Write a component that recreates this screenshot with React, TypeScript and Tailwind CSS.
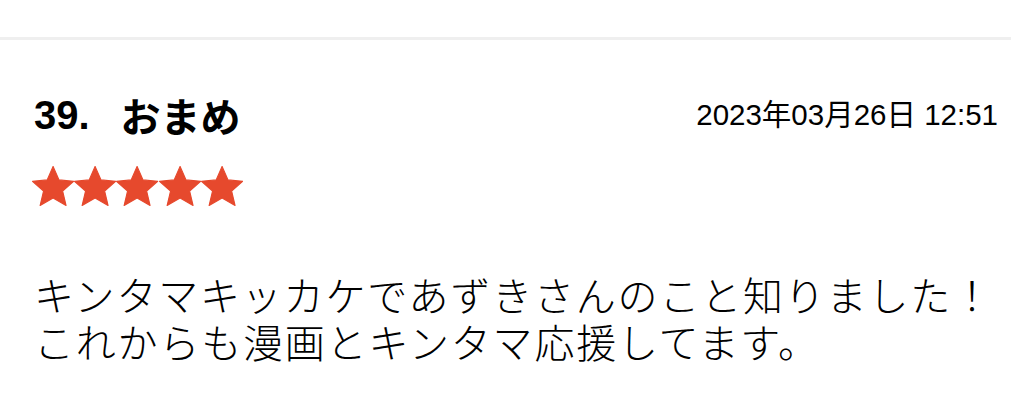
import React from 'react'

const latin = { fontFamily: '"Liberation Sans", "Noto Sans CJK JP", sans-serif' }
const jp = { fontFamily: '"Noto Sans CJK JP", "Liberation Sans", sans-serif' }

function Star() {
  return (
    <svg viewBox="1 1 22 22" className="w-[42.2px] h-[42px]" aria-hidden>
      <path
        d="M12 1.2l3.1 7.1 7.7.7-5.8 5.1 1.8 7.6L12 17.7l-6.8 4 1.8-7.6-5.8-5.1 7.7-.7z"
        fill="#e6492d"
        stroke="#e6492d"
        strokeWidth="0.6"
        strokeLinejoin="round"
      />
    </svg>
  )
}

export default function App() {
  return (
    <div className="w-[1011px] h-[414px] bg-white overflow-hidden text-black">
      <div className="h-[37px]" />
      <div className="h-[3px] bg-[#efefef]" />

      <div className="pl-[34px] pr-[13px]">
        {/* header */}
        <div className="flex items-center justify-between mt-[51px] h-[48px]">
          <div className="flex items-center text-[40px] font-bold leading-none">
            <span style={latin}>39.</span>
            <span style={jp} className="ml-[31px]">おまめ</span>
          </div>
          <div style={latin} className="text-[29.5px] leading-none">
            2023年03月26日 12:51
          </div>
        </div>

        {/* rating */}
        <div className="flex -ml-[2px] mt-[27px]">
          <Star />
          <Star />
          <Star />
          <Star />
          <Star />
        </div>

        {/* comment */}
        <div style={jp} className="mt-[63px] text-[40px] font-light tracking-[1.8px]">
          <p className="h-[47px] leading-[47px]">キンタマキッカケであずきさんのこと知りました！</p>
          <p className="h-[47px] leading-[47px]">これからも漫画とキンタマ応援してます。</p>
        </div>
      </div>
    </div>
  )
}
